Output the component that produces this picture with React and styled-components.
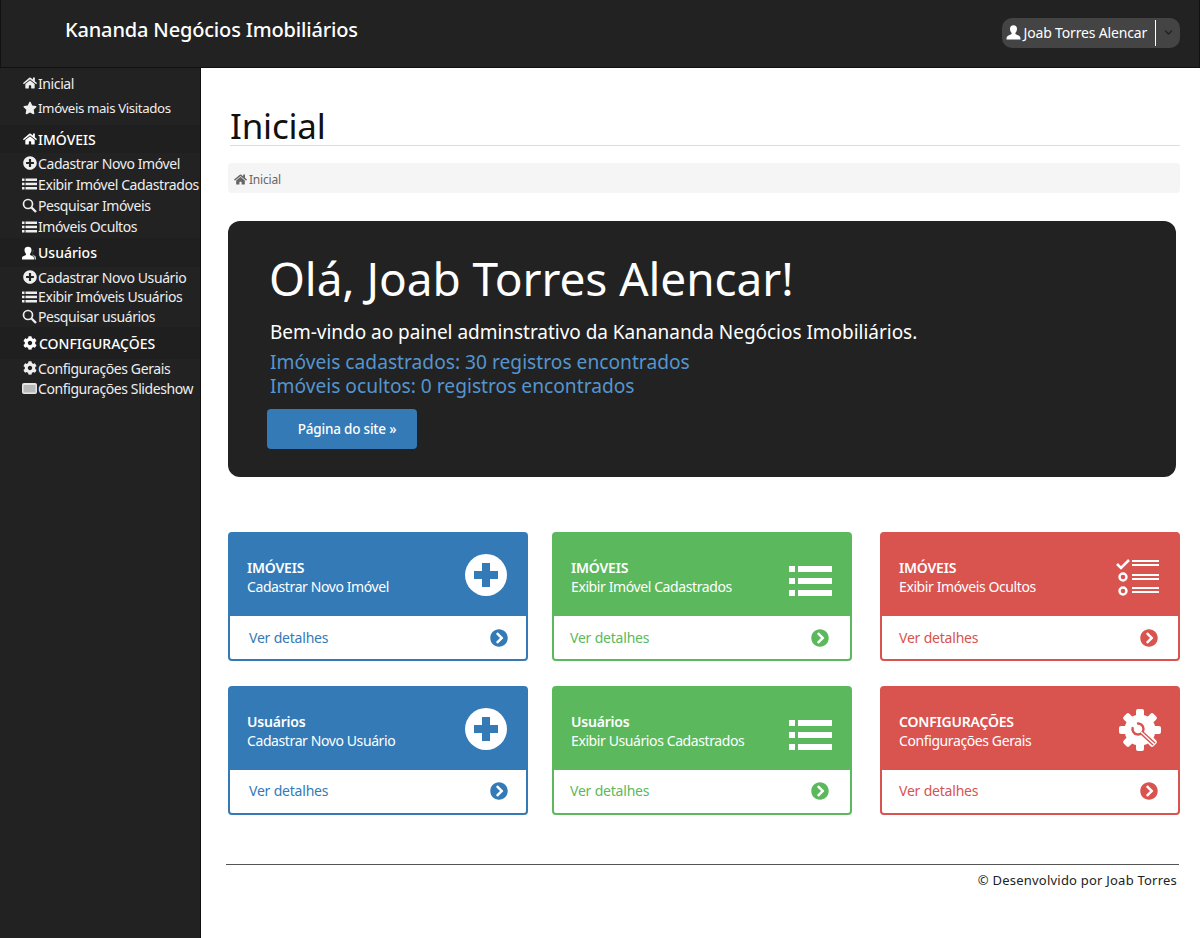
import styled, { createGlobalStyle } from 'styled-components'
import {
  FaHome,
  FaStar,
  FaPlusCircle,
  FaCog,
  FaChevronCircleRight,
  FaChevronDown,
} from 'react-icons/fa'

const GlobalStyle = createGlobalStyle`
  * { box-sizing: border-box; }
  html, body { margin: 0; padding: 0; }
  body {
    background: #fff;
    font-family: "Noto Sans", "Open Sans", sans-serif;
    font-size: 14px;
    color: #222;
  }
`

const palette = {
  blue: { main: '#337ab7', footPad: 19, iconPad: 18 },
  green: { main: '#5cb85c', footPad: 16, iconPad: 21 },
  red: { main: '#d9534f', footPad: 17, iconPad: 20 },
}

const iconOffsets = {
  plus: { top: 0, right: 0 },
  list: { top: 12, right: -1 },
  check: { top: 4, right: 0 },
  tools: { top: 2, right: -2 },
}

function UserGlyph({ size = 15 }) {
  return (
    <svg width={size} height={size} viewBox="0 0 15 15" fill="currentColor">
      <path d="M11 3.800c0 1.700-.8 3.400-1.700 4.200 0 1 .6 1.500 2 2 1.900.7 3.200 1.300 3.200 3.600v1H.5v-1c0-2.300 1.300-2.900 3.200-3.600 1.400-.5 2-1 2-2C4.800 7.200 4 5.500 4 3.800 4 1.500 5.400.3 7.500.3S11 1.500 11 3.800z" />
    </svg>
  )
}

function UsersGlyph() {
  return (
    <svg width="17" height="14" viewBox="0 0 17 14" fill="currentColor">
      <path d="M10.500 4c0 1.600-.8 3.100-1.600 3.900 0 1 .6 1.400 1.900 1.800 1.300.5 2.200 1 2.200 2.300v1.500H1V12c0-1.300.9-1.800 2.200-2.300 1.300-.4 1.900-.8 1.900-1.800C4.300 7.100 3.500 5.600 3.500 4 3.500 2 4.900.8 7 .8S10.500 2 10.500 4z" />
      <path d="M12 3.500c.5 1.200.3 3.200-.6 4.600.2.700.7 1 1.600 1.400 1.100.4 2 1 2 2.200v1.800h-1.500V12c0-1.500-.9-2.300-2.100-2.700l.4-2z" opacity=".75" />
    </svg>
  )
}

function ListGlyph() {
  return (
    <svg width="15" height="12" viewBox="0 0 15 12" fill="currentColor">
      <rect x="0" y="0.500" width="2.500" height="2.500" />
      <rect x="3.500" y="0.500" width="11.500" height="2.500" />
      <rect x="0" y="4.700" width="2.500" height="2.500" />
      <rect x="3.500" y="4.700" width="11.500" height="2.500" />
      <rect x="0" y="9" width="2.500" height="2.500" />
      <rect x="3.500" y="9" width="11.500" height="2.500" />
    </svg>
  )
}

function SearchGlyph() {
  return (
    <svg width="15" height="15" viewBox="0 0 15 15" fill="none" stroke="currentColor">
      <circle cx="6" cy="6" r="4.500" strokeWidth="1.700" />
      <path d="M9.500 9.500l4.500 4.500" strokeWidth="2.400" />
    </svg>
  )
}

function SlideGlyph() {
  return (
    <svg width="15" height="12" viewBox="0 0 15 12">
      <rect x="0" y="1" width="15" height="11" rx="2" fill="#e6e6e6" />
      <rect x="1.500" y="3" width="12" height="7.500" fill="#b9b9b9" />
    </svg>
  )
}

function ChecklistGlyph() {
  return (
    <svg width="43" height="38" viewBox="0 0 43 38" fill="none" stroke="#fff">
      <path d="M1 6l4 4 8-8" strokeWidth="2.500" />
      <path d="M16 3h27M16 7h27M16 17h27M16 21h27M16 30h27M16 34h27" strokeWidth="1.800" />
      <circle cx="7" cy="19" r="3.500" strokeWidth="2.400" />
      <circle cx="7" cy="33" r="3.500" strokeWidth="2.400" />
    </svg>
  )
}

function ToolsGlyph() {
  const teeth = [0, 45, 90, 135, 180, 225, 270, 315]
  return (
    <svg width="42" height="42" viewBox="0 0 42 42" fill="none">
      <circle cx="21" cy="21" r="15.500" fill="#fff" />
      {teeth.map((deg) => (
        <rect key={deg} x="17" y="0" width="8" height="10" rx="2" fill="#fff" transform={`rotate(${deg} 21 21)`} />
      ))}
      <path d="M18 14.600A5.500 5.500 0 1 1 13.800 18.200" stroke="#d9534f" strokeWidth="2.400" />
      <path d="M23 24l12 11" stroke="#d9534f" strokeWidth="4.400" />
      <path d="M22 23l13 12" stroke="#fff" strokeWidth="1.600" />
    </svg>
  )
}

const sideGroups = [
  {
    items: [
      { icon: <FaHome />, label: 'Inicial', h: 24 },
      { icon: <FaStar />, label: 'Imóveis mais Visitados', h: 26, small: true },
    ],
  },
  {
    heading: { icon: <FaHome />, label: 'IMÓVEIS', h: 28, top: 4 },
    items: [
      { icon: <FaPlusCircle />, label: 'Cadastrar Novo Imóvel', h: 20 },
      { icon: <ListGlyph />, label: 'Exibir Imóvel Cadastrados', h: 22 },
      { icon: <SearchGlyph />, label: 'Pesquisar Imóveis', h: 21 },
      { icon: <ListGlyph />, label: 'Imóveis Ocultos', h: 21 },
    ],
  },
  {
    heading: { icon: <UsersGlyph />, label: 'Usuários', h: 29, top: 1 },
    items: [
      { icon: <FaPlusCircle />, label: 'Cadastrar Novo Usuário', h: 20 },
      { icon: <ListGlyph />, label: 'Exibir Imóveis Usuários', h: 19 },
      { icon: <SearchGlyph />, label: 'Pesquisar usuários', h: 20 },
    ],
  },
  {
    heading: { icon: <FaCog />, label: 'CONFIGURAÇÕES', h: 32, top: 1, wide: true },
    items: [
      { icon: <FaCog />, label: 'Configurações Gerais', h: 18 },
      { icon: <SlideGlyph />, label: 'Configurações Slideshow', h: 22 },
    ],
  },
]

const cards = [
  { tone: 'blue', title: 'IMÓVEIS', text: 'Cadastrar Novo Imóvel', icon: 'plus' },
  { tone: 'green', title: 'IMÓVEIS', text: 'Exibir Imóvel Cadastrados', icon: 'list' },
  { tone: 'red', title: 'IMÓVEIS', text: 'Exibir Imóveis Ocultos', icon: 'check' },
  { tone: 'blue', title: 'Usuários', text: 'Cadastrar Novo Usuário', icon: 'plus', lift: true },
  { tone: 'green', title: 'Usuários', text: 'Exibir Usuários Cadastrados', icon: 'list', lift: true },
  { tone: 'red', title: 'CONFIGURAÇÕES', text: 'Configurações Gerais', icon: 'tools', lift: true },
]

function CardIcon({ kind }) {
  if (kind === 'plus') {
    return (
      <PlusBadge>
        <svg width="26" height="26" viewBox="0 0 26 26">
          <path d="M9 1h8v8h8v8h-8v8H9v-8H1V9h8z" fill="#337ab7" />
        </svg>
      </PlusBadge>
    )
  }
  if (kind === 'list') {
    return (
      <svg width="43" height="30" viewBox="0 0 43 30" fill="#fff">
        <rect x="0" y="0" width="6" height="6" />
        <rect x="9" y="0" width="34" height="6" />
        <rect x="0" y="12" width="6" height="6" />
        <rect x="9" y="12" width="34" height="6" />
        <rect x="0" y="24" width="6" height="6" />
        <rect x="9" y="24" width="34" height="6" />
      </svg>
    )
  }
  if (kind === 'check') return <ChecklistGlyph />
  return <ToolsGlyph />
}

export default function App() {
  return (
    <>
      <GlobalStyle />
      <Page>
        <TopBar>
          <Brand>Kananda Negócios Imobiliários</Brand>
          <UserButton>
            <UserName>
              <UserGlyph />
              Joab Torres Alencar
            </UserName>
            <UserCaret>
              <FaChevronDown size={9} />
            </UserCaret>
          </UserButton>
        </TopBar>
        <Body>
          <Sidebar>
            {sideGroups.map((group, i) => (
              <SideGroup key={i}>
                {group.heading && (
                  <SideHeading $h={group.heading.h} $top={group.heading.top} $wide={group.heading.wide}>
                    <SideIcon>{group.heading.icon}</SideIcon>
                    {group.heading.label}
                  </SideHeading>
                )}
                {group.items.map((item) => (
                  <SideLink key={item.label} $h={item.h} $small={item.small}>
                    <SideIcon>{item.icon}</SideIcon>
                    {item.label}
                  </SideLink>
                ))}
              </SideGroup>
            ))}
          </Sidebar>
          <Main>
            <PageTitle>Inicial</PageTitle>
            <Breadcrumb>
              <FaHome size={13} />
              Inicial
            </Breadcrumb>
            <Jumbotron>
              <Hello>Olá, Joab Torres Alencar!</Hello>
              <Welcome>Bem-vindo ao painel adminstrativo da Kanananda Negócios Imobiliários.</Welcome>
              <Stat>Imóveis cadastrados: 30 registros encontrados</Stat>
              <Stat>Imóveis ocultos: 0 registros encontrados</Stat>
              <SiteButton>Página do site »</SiteButton>
            </Jumbotron>
            <CardGrid>
              {cards.map((card) => (
                <Card key={card.tone + card.text} $tone={card.tone}>
                  <CardHead $tone={card.tone}>
                    <CardText>
                      <CardTitle>{card.title}</CardTitle>
                      {card.text}
                    </CardText>
                    <CardIconSlot $kind={card.icon}>
                      <CardIcon kind={card.icon} />
                    </CardIconSlot>
                  </CardHead>
                  <CardFoot $tone={card.tone} $lift={card.lift}>
                    Ver detalhes
                    <FaChevronCircleRight size={18} />
                  </CardFoot>
                </Card>
              ))}
            </CardGrid>
            <Footer>© Desenvolvido por Joab Torres</Footer>
          </Main>
        </Body>
      </Page>
    </>
  )
}

const Page = styled.div`
  display: flex;
  flex-direction: column;
  width: 1200px;
  height: 938px;
  overflow: hidden;
`

const TopBar = styled.header`
  display: flex;
  align-items: center;
  justify-content: space-between;
  flex: none;
  height: 68px;
  padding: 0 19px 8px 64px;
  background: #222;
  border: 1px solid #111;
  border-top: 0;
`

const Brand = styled.div`
  color: #fff;
  font-size: 20px;
  font-weight: 500;
  letter-spacing: -0.17px;
`

const UserButton = styled.div`
  display: flex;
  align-items: center;
  height: 30px;
  margin-top: 6px;
  border-radius: 10px;
  background: #444;
  color: #fff;
`

const UserName = styled.span`
  display: flex;
  align-items: center;
  gap: 3px;
  height: 100%;
  padding: 0 8px 0 4px;
  font-size: 14px;
  letter-spacing: -0.17px;
`

const UserCaret = styled.span`
  display: flex;
  align-items: center;
  justify-content: center;
  width: 25px;
  height: 26px;
  border-left: 1px solid #fff;
  color: #222;
`

const Body = styled.div`
  display: flex;
  flex: 1;
  min-height: 0;
`

const Sidebar = styled.nav`
  flex: none;
  width: 201px;
  padding-top: 3px;
  background: #222;
  border-right: 1px solid #111;
  color: #fff;
  font-size: 14px;
`

const SideGroup = styled.div`
  display: flex;
  flex-direction: column;
`

const SideHeading = styled.div`
  display: flex;
  align-items: center;
  gap: ${(p) => (p.$wide ? '1px' : '0')};
  height: ${(p) => p.$h}px;
  margin-top: ${(p) => p.$top}px;
  padding-left: 21px;
  background: #1f1f1f;
  font-weight: 500;
  white-space: nowrap;
`

const SideLink = styled.a`
  display: flex;
  align-items: center;
  height: ${(p) => p.$h}px;
  padding-left: 21px;
  color: #eee;
  font-size: ${(p) => (p.$small ? '13.3px' : '14px')};
  white-space: nowrap;
  letter-spacing: -0.4px;
`

const SideIcon = styled.span`
  display: flex;
  align-items: center;
  justify-content: center;
  flex: none;
  width: 17px;
  font-size: 14px;
`

const Main = styled.main`
  flex: 1;
  min-width: 0;
  padding: 0 20px 0 27px;
`

const PageTitle = styled.h1`
  height: 42px;
  margin: 36px 0 0 2px;
  border-bottom: 1px solid #ddd;
  color: #111;
  font-size: 35px;
  font-weight: 400;
  line-height: 44px;
  letter-spacing: -0.2px;
`

const Breadcrumb = styled.div`
  display: flex;
  align-items: center;
  gap: 2px;
  height: 30px;
  margin-top: 17px;
  padding: 2px 0 0 6px;
  border-radius: 4px;
  background: #f5f5f5;
  color: #666;
  font-size: 12px;
  letter-spacing: -0.2px;
`

const Jumbotron = styled.section`
  display: flex;
  flex-direction: column;
  align-items: flex-start;
  width: 948px;
  height: 256px;
  margin-top: 28px;
  padding: 26px 0 0 42px;
  border-radius: 12px;
  background: #222;
  color: #fff;
`

const Hello = styled.h2`
  margin: 0 0 0 -1px;
  font-size: 46px;
  font-weight: 400;
  line-height: 62px;
  letter-spacing: -0.08px;
`

const Welcome = styled.p`
  margin: 9px 0 4px;
  font-size: 19px;
  line-height: 28px;
  letter-spacing: -0.03px;
`

const Stat = styled.div`
  color: #5595ce;
  font-size: 19.2px;
  line-height: 24px;
`

const SiteButton = styled.button`
  width: 150px;
  height: 40px;
  margin: 11px 0 0 -3px;
  padding: 0 0 0 10px;
  border: 0;
  border-radius: 4px;
  background: #337ab7;
  color: #fff;
  font: inherit;
  font-size: 13.5px;
  font-weight: 500;
  text-align: center;
  letter-spacing: -0.2px;
`

const CardGrid = styled.div`
  display: grid;
  grid-template-columns: 300px 300px 304px;
  column-gap: 24px;
  row-gap: 25px;
  margin-top: 55px;

  & > :nth-child(3n) {
    margin-left: 4px;
  }
`

const Card = styled.article`
  display: flex;
  flex-direction: column;
  height: 129px;
  border: 2px solid ${(p) => palette[p.$tone].main};
  border-radius: 4px;
  background: #fff;
`

const CardHead = styled.div`
  display: flex;
  align-items: center;
  justify-content: space-between;
  height: 82px;
  padding: 0 19px 0 17px;
  background: ${(p) => palette[p.$tone].main};
  color: #fff;
  font-size: 14px;
  letter-spacing: -0.4px;
`

const CardText = styled.div`
  display: flex;
  flex-direction: column;
  gap: 1px;
  padding-top: 4px;
  line-height: 18px;
`

const CardTitle = styled.strong`
  font-weight: 600;
  letter-spacing: -0.2px;
`

const CardIconSlot = styled.div`
  display: flex;
  align-items: center;
  justify-content: center;
  margin-top: ${(p) => iconOffsets[p.$kind].top}px;
  margin-right: ${(p) => iconOffsets[p.$kind].right}px;
`

const PlusBadge = styled.div`
  display: flex;
  align-items: center;
  justify-content: center;
  width: 42px;
  height: 42px;
  border-radius: 50%;
  background: #fff;
`

const CardFoot = styled.div`
  display: flex;
  align-items: center;
  justify-content: space-between;
  flex: 1;
  padding: 0 ${(p) => palette[p.$tone].iconPad}px ${(p) => (p.$lift ? 2 : 0)}px ${(p) => palette[p.$tone].footPad}px;
  color: ${(p) => palette[p.$tone].main};
  font-size: 14px;
  letter-spacing: -0.2px;
`

const Footer = styled.footer`
  margin: 49px 1px 0 -2px;
  padding: 6px 2px 0 0;
  border-top: 1px solid #555;
  color: #222;
  font-size: 13px;
  line-height: 18px;
  text-align: right;
  letter-spacing: 0.22px;
`
